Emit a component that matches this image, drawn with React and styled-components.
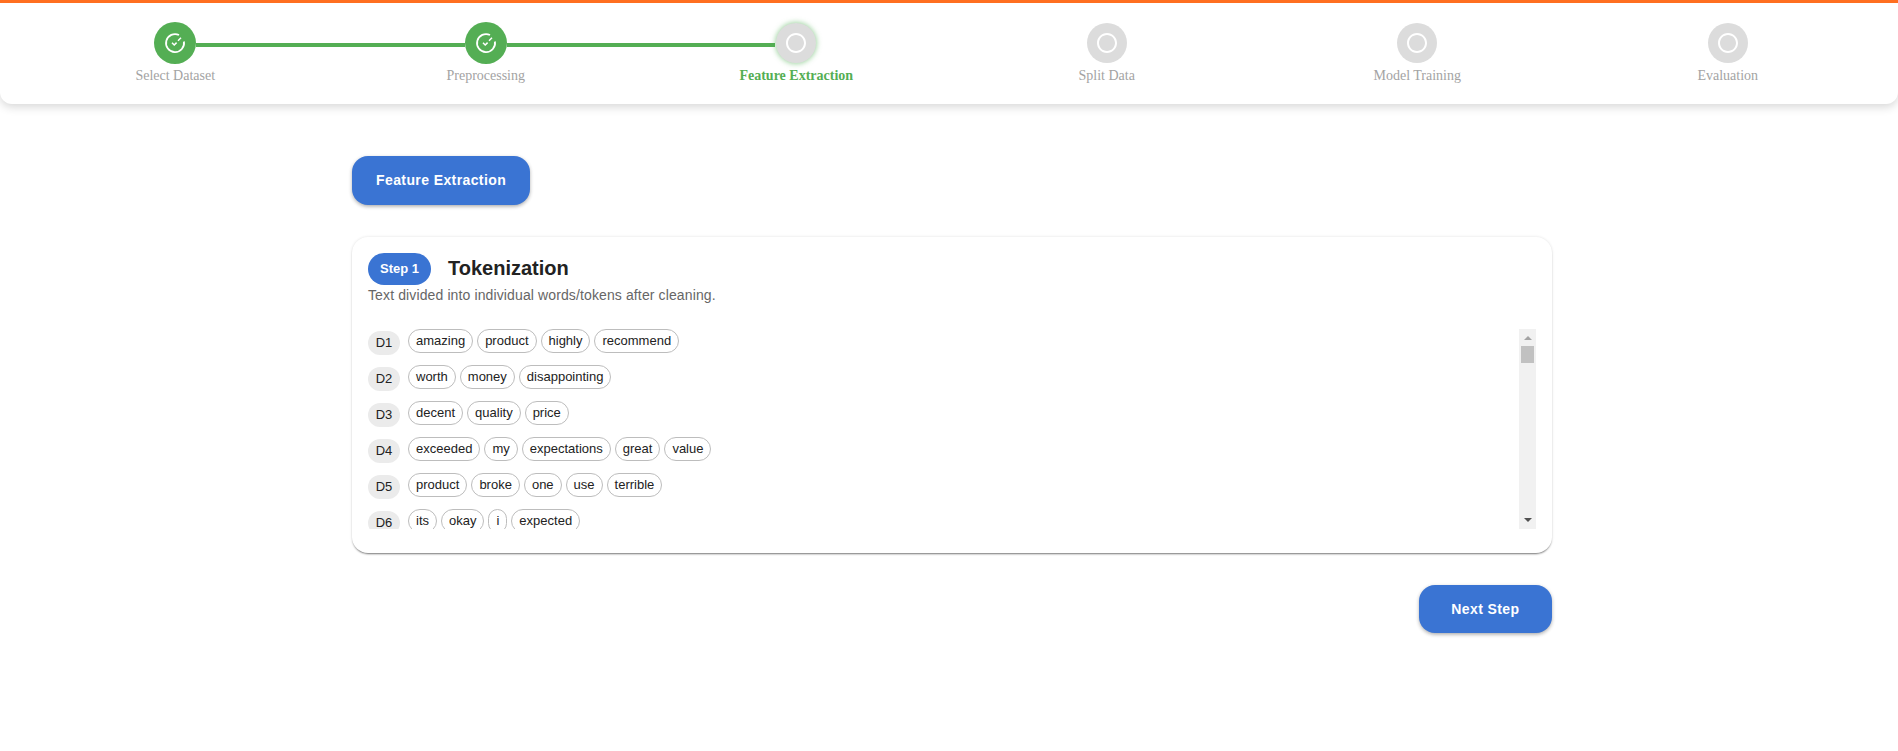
import { createGlobalStyle, styled } from "styled-components";

const steps = [
  "Select Dataset",
  "Preprocessing",
  "Feature Extraction",
  "Split Data",
  "Model Training",
  "Evaluation",
];
const activeStep = 2;

const tokens = [
  ["amazing", "product", "highly", "recommend"],
  ["worth", "money", "disappointing"],
  ["decent", "quality", "price"],
  ["exceeded", "my", "expectations", "great", "value"],
  ["product", "broke", "one", "use", "terrible"],
  ["its", "okay", "i", "expected"],
];

const GlobalStyle = createGlobalStyle`
  body {
    margin: 0;
    background: #fff;
    font-family: "Liberation Sans", Arial, sans-serif;
  }
`;

const Page = styled.div`
  min-height: 751px;
  overflow: hidden;
`;

const Header = styled.header`
  border-top: 3px solid #ff6f20;
  border-radius: 0 0 12px 12px;
  background: #fff;
  box-shadow: 0 3px 10px rgba(0, 0, 0, 0.16);
  padding: 17px 15px 18px 20px;
`;

const Stepper = styled.ol`
  display: flex;
  margin: 0;
  padding: 0;
  list-style: none;
`;

const Step = styled.li`
  flex: 1;
  display: flex;
  flex-direction: column;
  align-items: center;
`;

const Track = styled.div`
  width: 100%;
  height: 46px;
  display: flex;
  align-items: center;
`;

const Segment = styled.div`
  flex: 1;
  height: 4px;
  margin-top: 4px;
  background: ${(p) => (p.$on ? "#54ae54" : "transparent")};
`;

const Circle = styled.div`
  width: ${(p) => (p.$done ? 42 : 40)}px;
  height: ${(p) => (p.$done ? 42 : 40)}px;
  flex: none;
  display: flex;
  align-items: center;
  justify-content: center;
  border-radius: 50%;
  background: ${(p) => (p.$done ? "#54ae54" : "#dcdcdc")};
  box-shadow: ${(p) => (p.$active ? "0 0 5px 1px rgba(76, 175, 80, 0.5)" : "none")};
  margin: ${(p) => (p.$active ? "0 1px" : "0")};
`;

const StepLabel = styled.span`
  font-family: "Liberation Serif", "Times New Roman", serif;
  font-size: 14px;
  line-height: 20px;
  font-weight: ${(p) => (p.$active ? 700 : 400)};
  color: ${(p) => (p.$active ? "#54ae54" : "#a3a3a3")};
`;

const Main = styled.main`
  width: 1200px;
  margin-left: 352px;
  padding-top: 52px;
  display: flex;
  flex-direction: column;
  gap: 32px;
`;

const ActionButton = styled.button`
  align-self: ${(p) => (p.$end ? "flex-end" : "flex-start")};
  border: 0;
  border-radius: 16px;
  background: #3a74d3;
  color: #fff;
  font-family: inherit;
  font-size: 14px;
  font-weight: 700;
  line-height: 24.5px;
  letter-spacing: 0.4px;
  padding: 12px ${(p) => (p.$end ? 32.5 : 24)}px;
  box-shadow: 0 2px 4px -1px rgba(0, 0, 0, 0.3), 0 1px 4px rgba(0, 0, 0, 0.12);
`;

const Card = styled.section`
  border-radius: 16px;
  background: #fff;
  padding: 16px 16px 24px;
  box-shadow: 0 2px 2px -1px rgba(0, 0, 0, 0.5), 0 0 3px rgba(0, 0, 0, 0.12);
`;

const CardHead = styled.div`
  display: flex;
  align-items: center;
  gap: 17px;
`;

const StepPill = styled.span`
  height: 32px;
  padding: 0 12px;
  display: flex;
  align-items: center;
  border-radius: 16px;
  background: #3a74d3;
  color: #fff;
  font-size: 13px;
  font-weight: 700;
`;

const CardTitle = styled.h2`
  margin: 0;
  font-size: 20px;
  font-weight: 700;
  color: #222;
`;

const CardText = styled.p`
  margin: 0 0 24px;
  font-size: 14px;
  line-height: 20px;
  letter-spacing: 0.12px;
  color: #666;
`;

const ListFrame = styled.div`
  height: 200px;
  display: flex;
`;

const TokenList = styled.div`
  flex: 1;
  overflow: hidden;
  display: flex;
  flex-direction: column;
  gap: 10px;
`;

const TokenRow = styled.div`
  display: flex;
  gap: 8px;
  flex: none;
`;

const DocTag = styled.span`
  margin-top: 2px;
  height: 24px;
  width: 32px;
  flex: none;
  display: flex;
  align-items: center;
  justify-content: center;
  border-radius: 12px;
  background: #ebebeb;
  color: #222;
  font-size: 13px;
`;

const Chips = styled.div`
  display: flex;
  gap: 4px;
`;

const Chip = styled.span`
  height: 24px;
  box-sizing: border-box;
  padding: 0 7px;
  display: flex;
  align-items: center;
  border: 1px solid #bdbdbd;
  border-radius: 12px;
  color: #222;
  font-size: 13px;
`;

const ScrollRail = styled.div`
  width: 17px;
  flex: none;
  display: flex;
  flex-direction: column;
  align-items: center;
  background: #f1f1f1;
`;

const ScrollArrow = styled.div`
  margin: ${(p) => (p.$down ? "auto 0 7px" : "7px 0 6px")};
  width: 0;
  height: 0;
  border-left: 4px solid transparent;
  border-right: 4px solid transparent;
  border-bottom: ${(p) => (p.$down ? "0" : "4px solid #a3a3a3")};
  border-top: ${(p) => (p.$down ? "4px solid #505050" : "0")};
`;

const ScrollThumb = styled.div`
  width: 13px;
  height: 17px;
  background: #c1c1c1;
`;

const TaskAlt = () => (
  <svg width="24" height="24" viewBox="0 0 24 24" fill="none" stroke="#fff">
    <path d="M16 4A9 9 0 1 0 20.9 10.5" strokeWidth="1.8" />
    <path d="M9 11.8l2.2 2.2 2.4-2.4M15 9.8l3-3" strokeWidth="1.5" />
  </svg>
);

const Ring = () => (
  <svg width="24" height="24" viewBox="0 0 24 24" fill="#fff">
    <path d="M12 2C6.48 2 2 6.48 2 12s4.48 10 10 10 10-4.48 10-10S17.52 2 12 2zm0 18c-4.42 0-8-3.58-8-8s3.58-8 8-8 8 3.58 8 8-3.58 8-8 8z" />
  </svg>
);

const App = () => {
  return (
    <Page>
      <GlobalStyle />
      <Header>
        <Stepper>
          {steps.map((label, i) => (
            <Step key={label}>
              <Track>
                <Segment $on={i > 0 && i <= activeStep} />
                <Circle $done={i < activeStep} $active={i === activeStep}>
                  {i < activeStep ? <TaskAlt /> : <Ring />}
                </Circle>
                <Segment $on={i < activeStep} />
              </Track>
              <StepLabel $active={i === activeStep}>{label}</StepLabel>
            </Step>
          ))}
        </Stepper>
      </Header>
      <Main>
        <ActionButton>Feature Extraction</ActionButton>
        <Card>
          <CardHead>
            <StepPill>Step 1</StepPill>
            <CardTitle>Tokenization</CardTitle>
          </CardHead>
          <CardText>Text divided into individual words/tokens after cleaning.</CardText>
          <ListFrame>
            <TokenList>
              {tokens.map((words, i) => (
                <TokenRow key={i}>
                  <DocTag>D{i + 1}</DocTag>
                  <Chips>
                    {words.map((word, j) => (
                      <Chip key={j}>{word}</Chip>
                    ))}
                  </Chips>
                </TokenRow>
              ))}
            </TokenList>
            <ScrollRail>
              <ScrollArrow />
              <ScrollThumb />
              <ScrollArrow $down />
            </ScrollRail>
          </ListFrame>
        </Card>
        <ActionButton $end>Next Step</ActionButton>
      </Main>
    </Page>
  );
};

export default App;
